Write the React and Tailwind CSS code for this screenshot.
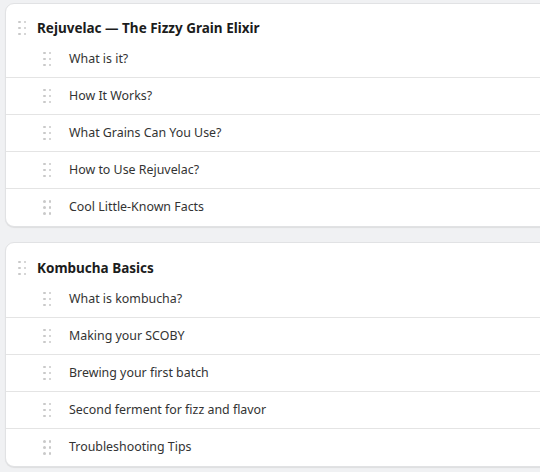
import React from "react";

function Handle({ className = "" }) {
  return (
    <div className={"grid grid-cols-2 gap-x-[3px] gap-y-[3.5px] w-[8px] shrink-0 " + className}>
      {[0, 1, 2, 3, 4, 5].map((i) => (
        <span key={i} className="block w-[2.5px] h-[2.5px] rounded-full bg-[#c9c9c9]" />
      ))}
    </div>
  );
}

const sections = [
  {
    title: "Rejuvelac — The Fizzy Grain Elixir",
    items: [
      "What is it?",
      "How It Works?",
      "What Grains Can You Use?",
      "How to Use Rejuvelac?",
      "Cool Little-Known Facts",
    ],
  },
  {
    title: "Kombucha Basics",
    items: [
      "What is kombucha?",
      "Making your SCOBY",
      "Brewing your first batch",
      "Second ferment for fizz and flavor",
      "Troubleshooting Tips",
    ],
  },
];

function Section({ title, items, first }) {
  return (
    <div className="w-[580px] bg-white rounded-[9px] border border-[#e1e2e4] shadow-[0_1px_1px_rgba(0,0,0,0.08)]">
      <div className={"flex items-center pl-[12px] " + (first ? "h-[37px] pt-[11px]" : "pt-[12px] h-[38px]")}>
        <Handle />
        <span className="ml-[11px] text-[13.5px] leading-[18px] font-bold text-[#1c1c1c]">{title}</span>
      </div>
      <div>
        {items.map((it, i) => (
          <div
            key={it}
            className={
              "flex items-center h-[37px] pl-[37px] " +
              (i < items.length - 1 ? "border-b border-[#e4e4e4]" : "")
            }
          >
            <Handle />
            <span className="ml-[18px] text-[12.4px] text-[#333333]">{it}</span>
          </div>
        ))}
      </div>
    </div>
  );
}

export default function App() {
  return (
    <div
      className="w-[540px] h-[472px] overflow-hidden bg-[#f0f1f3] pt-[3px] pl-[5px] flex flex-col gap-[15px]"
      style={{ fontFamily: '"Noto Sans", "Open Sans", sans-serif' }}
    >
      {sections.map((s, i) => (
        <Section key={s.title} {...s} first={i === 0} />
      ))}
    </div>
  );
}
